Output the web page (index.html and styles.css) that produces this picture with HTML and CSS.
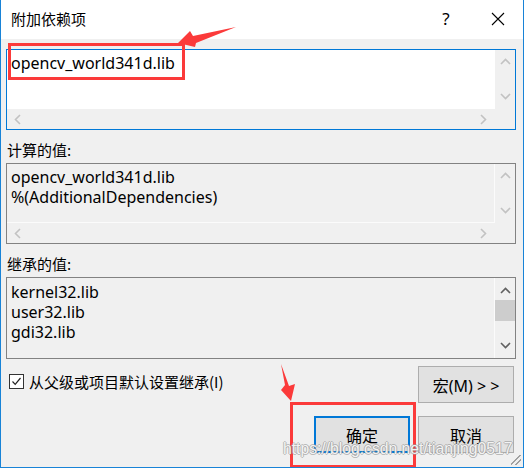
FILE: index.html
```html
<!DOCTYPE html>
<html lang="zh-CN">
<head>
<meta charset="UTF-8" />
<title>附加依赖项</title>
<link rel="stylesheet" href="styles.css">
</head>
<body>
<div class="dialog">
  <!-- Заголовок окна -->
  <div class="titlebar">
    <span class="title">附加依赖项</span>
    <span class="help">?</span>
    <span class="close">
      <svg width="14" height="14" viewBox="0 0 14 14"><path d="M1 1 L13 13 M13 1 L1 13" stroke="#000" stroke-width="1.1" fill="none"/></svg>
    </span>
  </div>

  <div class="content">
    <!-- Редактируемое поле -->
    <div class="listbox focused">
      <div class="lb-row">
        <div class="lb-text white">opencv_world341d.lib</div>
        <div class="vscroll">
          <svg class="arrow" width="11" height="7" viewBox="0 0 11 7"><polyline points="1,6 5.5,1.5 10,6" class="off"/></svg>
          <svg class="arrow" width="11" height="7" viewBox="0 0 11 7"><polyline points="1,1 5.5,5.5 10,1" class="off"/></svg>
        </div>
      </div>
      <div class="hscroll">
        <svg class="arrow" width="7" height="11" viewBox="0 0 7 11"><polyline points="6,1 1.5,5.5 6,10" class="off"/></svg>
        <svg class="arrow" width="7" height="11" viewBox="0 0 7 11"><polyline points="1,1 5.5,5.5 1,10" class="off"/></svg>
      </div>
    </div>

    <div class="label">计算的值:</div>
    <div class="listbox">
      <div class="lb-row">
        <div class="lb-text">opencv_world341d.lib<br>%(AdditionalDependencies)</div>
        <div class="vscroll">
          <svg class="arrow" width="11" height="7" viewBox="0 0 11 7"><polyline points="1,6 5.5,1.5 10,6" class="off"/></svg>
          <svg class="arrow" width="11" height="7" viewBox="0 0 11 7"><polyline points="1,1 5.5,5.5 10,1" class="off"/></svg>
        </div>
      </div>
      <div class="hscroll">
        <svg class="arrow" width="7" height="11" viewBox="0 0 7 11"><polyline points="6,1 1.5,5.5 6,10" class="off"/></svg>
        <svg class="arrow" width="7" height="11" viewBox="0 0 7 11"><polyline points="1,1 5.5,5.5 1,10" class="off"/></svg>
      </div>
    </div>

    <div class="label">继承的值:</div>
    <div class="listbox inherited">
      <div class="lb-row">
        <div class="lb-text">kernel32.lib<br>user32.lib<br>gdi32.lib</div>
        <div class="vscroll">
          <svg class="arrow" width="11" height="7" viewBox="0 0 11 7"><polyline points="1,6 5.5,1.5 10,6" class="on"/></svg>
          <div class="thumb"></div>
          <svg class="arrow down" width="11" height="7" viewBox="0 0 11 7"><polyline points="1,1 5.5,5.5 10,1" class="on"/></svg>
        </div>
      </div>
    </div>

    <div class="row-opts">
      <label class="check">
        <span class="box">
          <svg width="11" height="11" viewBox="0 0 11 11"><polyline points="1.5,5.5 4.2,8.3 9.5,2" fill="none" stroke="#222" stroke-width="1.2"/></svg>
        </span>
        从父级或项目默认设置继承(I)
      </label>
      <button class="btn">宏(M) &gt; &gt;</button>
    </div>

    <div class="row-buttons">
      <button class="btn default">确定</button>
      <button class="btn">取消</button>
    </div>
  </div>

  <div class="grip"></div>

  <!-- Пометки поверх скриншота -->
  <svg class="annot" width="527" height="469" viewBox="0 0 527 469">
    <rect x="9.5" y="44.5" width="174" height="34" fill="none" stroke="#fb3a3a" stroke-width="3"/>
    <polygon points="178,43 190,31 193,36 236,27 196,43 195,47" fill="#fb3a3a"/>
    <rect x="291.5" y="403.5" width="123" height="63" fill="none" stroke="#fb3a3a" stroke-width="3"/>
    <polygon points="281,364 285,385 281,390 291,401 295,384 289,386" fill="#fb3a3a"/>
  </svg>

  <div class="watermark">https://blog.csdn.net/tianjing0517</div>
</div>
</body>
</html>
```

FILE: styles.css
```css
body {
  margin: 0;
  background: #fff;
  font-family: "Noto Sans", "Noto Sans CJK SC", sans-serif;
  font-size: 16px;
  color: #000;
}
.dialog {
  position: relative;
  width: 522px;
  height: 467px;
  border: 1px solid #1883d7;
  border-top: none;
  background: #f0f0f0;
  overflow: hidden;
}
.titlebar {
  height: 39px;
  background: #fff;
  display: flex;
  align-items: center;
  padding-left: 10px;
}
.title {
  flex: 1;
  font-family: "Noto Sans CJK SC", sans-serif;
  font-size: 15px;
  line-height: 20px;
  padding-bottom: 2px;
}
.help {
  width: 24px;
  font-size: 17px;
  text-align: center;
  margin-right: 33px;
  padding-bottom: 2px;
}
.close {
  width: 14px;
  height: 14px;
  margin-right: 18px;
  margin-bottom: 2px;
}
.close svg { display: block; }

.content {
  padding: 10px 6px 0 5px;
}
.listbox {
  width: 508px;
  border: 1px solid #828282;
  background: #f0f0f0;
}
.listbox.focused {
  border-color: #0078d7;
}
.lb-row {
  display: flex;
  height: 59px;
}
.inherited .lb-row {
  height: 80px;
}
.lb-text {
  flex: 1;
  padding: 3px 0 0 4px;
  line-height: 20px;
  border-right: 1px solid #fbfbfb;
  border-bottom: 1px solid #fbfbfb;
}
.inherited .lb-text {
  border-bottom: none;
  padding-top: 4px;
}
.lb-text.white {
  background: #fff;
  border-color: #fff;
}
.vscroll {
  width: 20px;
  display: flex;
  flex-direction: column;
  align-items: center;
  justify-content: space-between;
  padding: 8px 0 9px;
}
.inherited .vscroll {
  padding: 9px 0 9px;
  justify-content: flex-start;
}
.thumb {
  width: 20px;
  height: 21px;
  background: #cdcdcd;
  margin-top: 6px;
}
.inherited .arrow.down {
  margin-top: auto;
}
.hscroll {
  height: 20px;
  width: 488px;
  display: flex;
  align-items: center;
  justify-content: space-between;
  padding: 0 8px 0 7px;
  box-sizing: border-box;
}
.arrow { display: block; }
.arrow polyline {
  fill: none;
  stroke-width: 1.6;
}
.arrow .off { stroke: #c2c2c2; }
.arrow .on { stroke: #606060; }

.label {
  font-family: "Noto Sans CJK SC", sans-serif;
  font-size: 15px;
  line-height: 20px;
  padding: 10px 0 0 1px;
  margin-bottom: 3px;
}

.row-opts {
  display: flex;
  justify-content: space-between;
  margin-top: 7px;
  padding-right: 3px;
}
.check {
  display: flex;
  align-items: center;
  gap: 5px;
  margin: 4px 0 0 3px;
  height: 22px;
  font-family: "Noto Sans CJK SC", sans-serif;
  font-size: 15px;
}
.check .box {
  width: 13px;
  height: 13px;
  border: 1px solid #333;
  background: #fff;
  display: flex;
  align-items: center;
  justify-content: center;
}
.btn {
  width: 96px;
  height: 37px;
  background: #e1e1e1;
  border: 1px solid #adadad;
  font-family: "Noto Sans", "Noto Sans CJK SC", sans-serif;
  font-size: 16px;
  color: #000;
  padding: 0;
}
.row-buttons {
  display: flex;
  justify-content: flex-end;
  gap: 8px;
  margin-top: 13px;
  padding-right: 3px;
}
.btn.default {
  border: 2px solid #0078d7;
}

.grip {
  position: absolute;
  right: 2px;
  bottom: 2px;
  width: 10px;
  height: 10px;
  background: linear-gradient(135deg, transparent 45%, #a0a0a0 45%, #a0a0a0 52%, transparent 52%, transparent 70%, #a0a0a0 70%, #a0a0a0 77%, transparent 77%);
}
.annot {
  position: absolute;
  left: -1px;
  top: 0;
  pointer-events: none;
}
.watermark {
  position: absolute;
  left: 282px;
  top: 439px;
  font-family: "Liberation Sans", sans-serif;
  font-size: 15.7px;
  line-height: 20px;
  color: rgba(255, 255, 255, 0.9);
  text-shadow: 1px 0 0 rgba(150, 150, 150, 0.6), -1px 0 0 rgba(150, 150, 150, 0.6), 0 1px 0 rgba(150, 150, 150, 0.6), 0 -1px 0 rgba(150, 150, 150, 0.6);
  white-space: nowrap;
}
```
